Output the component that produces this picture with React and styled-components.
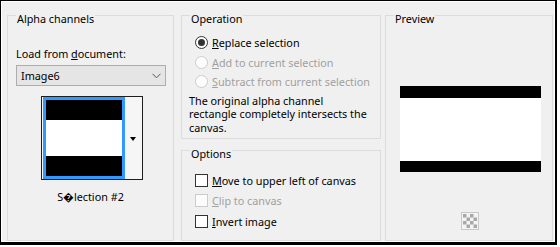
import React from "react";
import styled, { createGlobalStyle } from "styled-components";

const GlobalStyle = createGlobalStyle`
  html, body {
    margin: 0;
    padding: 0;
    background: #ffffff;
  }
  body {
    font-family: "Noto Sans", "Open Sans", sans-serif;
    font-size: 10.8px;
    color: #000;
  }
`;

const Frame = styled.div`
  box-sizing: border-box;
  width: 557px;
  height: 245px;
  background: #f0f0f0;
  border-style: solid;
  border-color: #000;
  border-width: 1px 2px 3px 1px;
  box-shadow: inset 1px 1px 0 #ffffff, inset -1px -1px 0 #ffffff;
  display: flex;
  align-items: flex-start;
  padding: 3px 0 0 6px;
`;

const Column = styled.div`
  display: flex;
  flex-direction: column;
  margin: 0 4px 0 7px;
`;

const Group = styled.fieldset`
  box-sizing: border-box;
  flex: none;
  margin: 0;
  padding: 0 8px;
  min-width: 0;
  width: ${(p) => p.$w}px;
  height: ${(p) => p.$h}px;
  border: 1px solid #dcdcdc;
  display: flex;
  flex-direction: column;
`;

const Legend = styled.legend`
  margin-left: 0;
  padding: 8px 1px 0;
  line-height: 14px;
`;

const Mn = styled.span`
  text-decoration: underline;
`;

const Label = styled.div`
  line-height: 14px;
  white-space: nowrap;
  margin-top: ${(p) => p.$mt || 0}px;
`;

const Select = styled.div`
  box-sizing: border-box;
  width: 150px;
  height: 21px;
  margin-top: 4px;
  background: #e5e5e5;
  border: 1px solid #adadad;
  display: flex;
  align-items: center;
  justify-content: space-between;
  padding: 0 4px 0 4px;

  svg {
    width: 9px;
    height: 6px;
  }
`;

const ThumbRow = styled.div`
  display: flex;
  justify-content: center;
  margin-top: 10px;
  padding-left: 2px;
`;

const Thumb = styled.div`
  box-sizing: border-box;
  width: 102px;
  height: 84px;
  border: 1px solid #1e1e1e;
  background: #f6f6f6;
  display: flex;
  padding-left: 1px;
`;

const Swatch = styled.div`
  box-sizing: border-box;
  width: 82px;
  height: 82px;
  border: 3px solid #3399ff;
  background: #000;
  display: flex;
  flex-direction: column;
  justify-content: center;
`;

const Band = styled.div`
  height: ${(p) => p.$h}px;
  background: ${(p) => (p.$white ? "#ffffff" : "#000000")};
`;

const DropArrow = styled.div`
  flex: 1;
  display: flex;
  align-items: center;
  justify-content: center;
  padding-top: 2px;

  &::before {
    content: "";
    border-left: 3.5px solid transparent;
    border-right: 3.5px solid transparent;
    border-top: 4px solid #000;
  }
`;

const Caption = styled.div`
  text-align: center;
  line-height: 14px;
  margin-top: 10px;
`;

const Option = styled.div`
  display: flex;
  align-items: center;
  gap: 4px;
  white-space: nowrap;
  height: ${(p) => p.$h || 19.5}px;
  padding-left: 5px;
  margin-top: ${(p) => p.$mt || 0}px;
  color: ${(p) => (p.$disabled ? "#a0a0a0" : "#000")};
`;

const Radio = styled.span`
  box-sizing: border-box;
  flex: none;
  width: 13px;
  height: 13px;
  border-radius: 50%;
  border: 1px solid ${(p) => (p.$disabled ? "#cccccc" : "#333333")};
  background: ${(p) => (p.$disabled ? "#fcfcfc" : "#ffffff")};
  display: flex;
  align-items: center;
  justify-content: center;

  &::after {
    content: "";
    width: 7px;
    height: 7px;
    border-radius: 50%;
    background: ${(p) => (p.$checked ? "#333333" : "transparent")};
  }
`;

const Check = styled.span`
  box-sizing: border-box;
  flex: none;
  width: 13px;
  height: 13px;
  border: 1px solid ${(p) => (p.$disabled ? "#cccccc" : "#333333")};
  background: ${(p) => (p.$disabled ? "#fcfcfc" : "#ffffff")};
`;

const Note = styled.div`
  line-height: 13.5px;
  white-space: nowrap;
  margin-top: 2px;
  margin-left: -1px;
`;

const PreviewArea = styled.div`
  flex: 1;
  display: flex;
  flex-direction: column;
  align-items: center;
  padding: 60px 0 0 2px;
`;

const PreviewImage = styled.div`
  width: 141px;
  height: 86px;
  display: flex;
  flex-direction: column;
`;

const CheckerIcon = styled.div`
  margin-top: 38px;
  width: 20px;
  height: 21px;
  display: flex;
  align-items: center;
  justify-content: center;
`;

const Checker = () => (
  <svg width="18" height="18" viewBox="0 0 18 18">
    <rect x="0.5" y="0.5" width="17" height="17" fill="#f4f4f4" stroke="#c8c8c8" />
    {[0, 1, 2, 3].map((r) =>
      [0, 1, 2, 3].map((c) =>
        (r + c) % 2 === 0 ? (
          <rect key={`${r}-${c}`} x={2 + c * 3.5} y={2 + r * 3.5} width="3.5" height="3.5" fill="#a8a8a8" />
        ) : null
      )
    )}
  </svg>
);

const Chevron = () => (
  <svg viewBox="0 0 9 6">
    <path d="M0.5 0.8 L4.5 4.8 L8.5 0.8" fill="none" stroke="#555" strokeWidth="1" />
  </svg>
);

export default function App() {
  return (
    <>
      <GlobalStyle />
      <Frame>
        <Group $w={167} $h={237}>
          <Legend>Alpha channels</Legend>
          <Label $mt={21}>
            Load from <Mn>d</Mn>ocument:
          </Label>
          <Select>
            <span>Image6</span>
            <Chevron />
          </Select>
          <ThumbRow>
            <Thumb>
              <Swatch>
                <Band $h={20} />
                <Band $h={36} $white />
                <Band $h={20} />
              </Swatch>
              <DropArrow />
            </Thumb>
          </ThumbRow>
          <Caption>S{"\uFFFD"}lection #2</Caption>
        </Group>

        <Column>
          <Group $w={200} $h={135}>
            <Legend>Operation</Legend>
            <Option $mt={7}>
              <Radio $checked />
              <span>
                <Mn>R</Mn>eplace selection
              </span>
            </Option>
            <Option $disabled>
              <Radio $disabled />
              <span>
                <Mn>A</Mn>dd to current selection
              </span>
            </Option>
            <Option $disabled>
              <Radio $disabled />
              <span>
                <Mn>S</Mn>ubtract from current selection
              </span>
            </Option>
            <Note>
              The original alpha channel
              <br />
              rectangle completely intersects the
              <br />
              canvas.
            </Note>
          </Group>
          <Group $w={200} $h={102}>
            <Legend>Options</Legend>
            <Option $h={20} $mt={9}>
              <Check />
              <span>
                <Mn>M</Mn>ove to upper left of canvas
              </span>
            </Option>
            <Option $h={21} $disabled>
              <Check $disabled />
              <span>
                <Mn>C</Mn>lip to canvas
              </span>
            </Option>
            <Option $h={21}>
              <Check />
              <span>
                <Mn>I</Mn>nvert image
              </span>
            </Option>
          </Group>
        </Column>

        <Group $w={168} $h={237}>
          <Legend>Preview</Legend>
          <PreviewArea>
            <PreviewImage>
              <Band $h={12} />
              <Band $h={63} $white />
              <Band $h={11} />
            </PreviewImage>
            <CheckerIcon>
              <Checker />
            </CheckerIcon>
          </PreviewArea>
        </Group>
      </Frame>
    </>
  );
}
